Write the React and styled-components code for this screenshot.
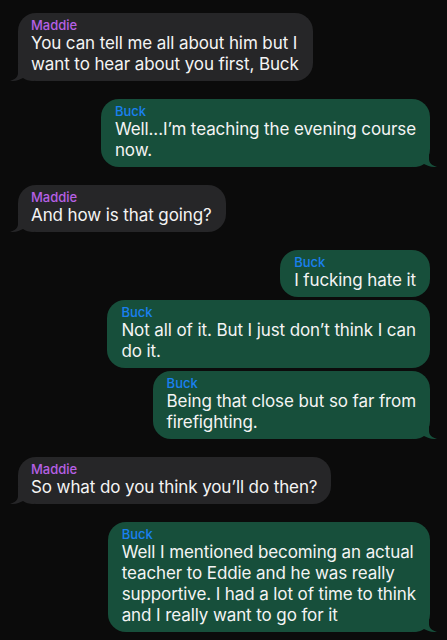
import React from "react";
import styled, { createGlobalStyle, css } from "styled-components";

const GlobalStyle = createGlobalStyle`
  html, body {
    margin: 0;
    padding: 0;
    background: #0b0b0b;
  }
  body {
    font-family: Inter, "Noto Sans", "Liberation Sans", sans-serif;
    -webkit-font-smoothing: antialiased;
  }
`;

const Thread = styled.div`
  width: 447px;
  height: 640px;
  box-sizing: border-box;
  padding: 13px 17px 0 18px;
  display: flex;
  flex-direction: column;
  gap: 18px;
  overflow: hidden;
  background: #0b0b0b;
`;

const Group = styled.div`
  display: flex;
  flex-direction: column;
  align-items: ${(p) => (p.$mine ? "flex-end" : "flex-start")};
  gap: 3px;
`;

const Bubble = styled.div`
  position: relative;
  box-sizing: border-box;
  padding: 4px 14px 6px 13px;
  border-radius: 18px;
  background: ${(p) => (p.$mine ? "#174f3b" : "#262628")};
  color: #f4f4f4;
  ${(p) =>
    p.$mine &&
    css`
      padding-left: 14px;
    `}
`;

const Name = styled.div`
  position: relative;
  font-size: 13px;
  line-height: 16px;
  font-weight: 500;
  color: ${(p) => (p.$mine ? "#1a80f0" : "#b660e4")};
`;

const Line = styled.div`
  position: relative;
  font-size: 17px;
  line-height: 21px;
  white-space: nowrap;
  letter-spacing: -0.1px;
`;

const Tail = styled.svg`
  position: absolute;
  bottom: 0;
  width: 24px;
  height: 17px;
  ${(p) =>
    p.$mine
      ? css`
          right: -7px;
          transform: scaleX(-1);
        `
      : css`
          left: -8px;
        `}
`;

const messages = [
  {
    mine: false,
    items: [["You can tell me all about him but I", "want to hear about you first, Buck"]],
  },
  {
    mine: true,
    items: [["Well...I\u2019m teaching the evening course", "now."]],
  },
  { mine: false, items: [["And how is that going?"]] },
  {
    mine: true,
    items: [
      ["I fucking hate it"],
      ["Not all of it. But I just don\u2019t think I can", "do it."],
      ["Being that close but so far from", "firefighting."],
    ],
  },
  { mine: false, items: [["So what do you think you\u2019ll do then?"]] },
  {
    mine: true,
    items: [
      [
        "Well I mentioned becoming an actual",
        "teacher to Eddie and he was really",
        "supportive. I had a lot of time to think",
        "and I really want to go for it",
      ],
    ],
  },
];

const BubbleTail = ({ mine, color }) => (
  <Tail $mine={mine} viewBox="0 0 24 17">
    <path
      d="M8 0 L8 9 C8 12.5 5.5 15.5 0 17 C5 17.3 9.5 16 13 14 C15.5 16 19 17 24 17 L24 0 Z"
      fill={color}
    />
  </Tail>
);

const App = () => {
  return (
    <>
      <GlobalStyle />
      <Thread>
        {messages.map((group, gi) => (
          <Group key={gi} $mine={group.mine}>
            {group.items.map((lines, i) => (
              <Bubble key={i} $mine={group.mine}>
                {i === group.items.length - 1 && (
                  <BubbleTail
                    mine={group.mine}
                    color={group.mine ? "#174f3b" : "#262628"}
                  />
                )}
                <Name $mine={group.mine}>{group.mine ? "Buck" : "Maddie"}</Name>
                {lines.map((l, li) => (
                  <Line key={li}>{l}</Line>
                ))}
              </Bubble>
            ))}
          </Group>
        ))}
      </Thread>
    </>
  );
};

export default App;
